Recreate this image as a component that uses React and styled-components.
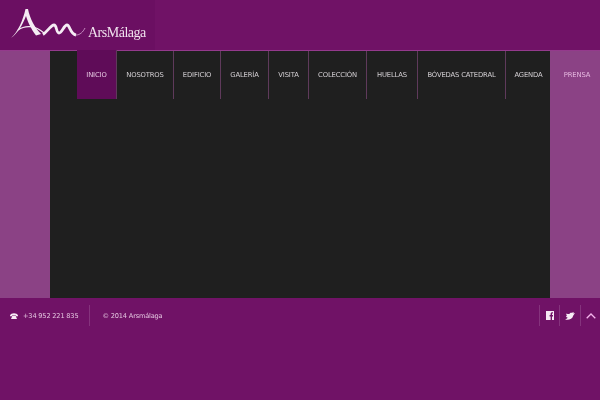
import React from 'react';
import styled, { createGlobalStyle } from 'styled-components';

const GlobalStyle = createGlobalStyle`
  html, body {
    margin: 0;
    padding: 0;
    background: #701266;
    font-family: "DejaVu Sans", Verdana, sans-serif;
  }
`;

const Page = styled.div`
  width: 600px;
  height: 400px;
  overflow: hidden;
  display: flex;
  flex-direction: column;
  background: #701266;
`;

const Header = styled.header`
  height: 50px;
  flex: none;
  display: flex;
  border-bottom: 1px solid #943a8c;
`;

const LogoBox = styled.div`
  width: 155px;
  height: 50px;
  background: #6b0f62;
  display: flex;
  align-items: flex-start;
  padding: 8px 0 0 10px;
  box-sizing: border-box;
  will-change: transform;
`;

const LogoName = styled.span`
  font-family: "Liberation Serif", serif;
  font-size: 14px;
  line-height: 16px;
  letter-spacing: -0.5px;
  color: #f0e2ee;
  margin: 17px 0 0 2px;
`;

const Main = styled.div`
  height: 247px;
  flex: none;
  display: flex;
`;

const Side = styled.div`
  width: 50px;
  flex: none;
  background: #8b4285;
`;

const Center = styled.main`
  position: relative;
  z-index: 1;
  width: 500px;
  flex: none;
  background: #1f1f1f;
  padding-left: 27px;
  box-sizing: border-box;
`;

const Nav = styled.nav`
  display: flex;
  height: 48px;
  width: 523px;
  will-change: transform;
`;

const NavItem = styled.a`
  width: ${(props) => props.$w}px;
  flex: none;
  box-sizing: border-box;
  display: flex;
  align-items: center;
  justify-content: center;
  font-size: 6.8px;
  letter-spacing: -0.14px;
  white-space: nowrap;
  color: ${(props) => (props.$active ? '#e3c4df' : props.$last ? '#e6b8e0' : '#d4d0d4')};
  background: ${(props) => (props.$active ? '#5f0c58' : 'transparent')};
  border-right: ${(props) => (props.$noLine ? 'none' : '1px solid #5f3a5b')};
  margin-top: ${(props) => (props.$active ? '-1px' : '0')};
`;

const Footer = styled.footer`
  flex: 1;
  display: flex;
  justify-content: space-between;
  align-items: flex-start;
  padding-top: 7px;
`;

const FooterLeft = styled.div`
  display: flex;
  align-items: center;
  height: 21px;
  padding-left: 10px;
  font-size: 6.6px;
  letter-spacing: -0.17px;
  color: #e3c4df;
  will-change: transform;
`;

const Phone = styled.span`
  display: flex;
  align-items: center;
  gap: 5px;
  padding-right: 11px;
  height: 21px;
  border-right: 1px solid #85337d;
  margin-right: 12px;
`;

const Social = styled.div`
  display: flex;
  height: 21px;
`;

const SocialBtn = styled.span`
  width: ${(props) => props.$w}px;
  height: 21px;
  box-sizing: border-box;
  display: flex;
  align-items: center;
  justify-content: center;
  border-left: 1px solid #85337d;
`;

const logoMark = (
  <svg width="76" height="32" viewBox="0 0 76 32" style={{ flex: 'none' }}>
    <path d="M1 30C8 24 13 12 15.500 1L18 1C20 11 25 20 31 26L26 27.500C21 21 17.500 13 16 8C13 16 8 25 1 30Z" fill="#f5ecf4" />
    <path d="M8 22C15 17 25 17 34 25" stroke="#f5ecf4" strokeWidth="1.300" fill="none" />
    <path d="M33 26.500C37 24 41 17 44 17C47 17 46 25 49 25C52 25 54 17 57 17C60 17 60 26 66 27" stroke="#f5ecf4" strokeWidth="2.800" fill="none" />
    <path d="M66 27C70 27 73 24 75 20" stroke="#d9a8d4" strokeWidth="0.8" fill="none" />
  </svg>
);

const navItems = [
  ['INICIO', 40],
  ['NOSOTROS', 57],
  ['EDIFICIO', 47],
  ['GALERÍA', 48],
  ['VISITA', 40],
  ['COLECCIÓN', 58],
  ['HUELLAS', 51],
  ['BÓVEDAS CATEDRAL', 88],
  ['AGENDA', 45],
  ['PRENSA', 52],
];

const App = () => {
  return (
    <Page>
      <GlobalStyle />
      <Header>
        <LogoBox>
          {logoMark}
          <LogoName>ArsMálaga</LogoName>
        </LogoBox>
      </Header>
      <Main>
        <Side />
        <Center>
          <Nav>
            {navItems.map(([label, w], i) => (
              <NavItem
                key={label}
                $w={w}
                $active={i === 0}
                $last={i === navItems.length - 1}
                $noLine={i >= navItems.length - 2}
              >
                {label}
              </NavItem>
            ))}
          </Nav>
        </Center>
        <Side />
      </Main>
      <Footer>
        <FooterLeft>
          <Phone>
            <svg width="8" height="6" viewBox="0 0 8 6">
              <path d="M0 2.500C1 -0.500 7 -0.500 8 2.500L8 3.200L5.800 3.200L5.800 2L2.200 2L2.200 3.200L0 3.200ZM2.500 2.500L5.500 2.500L7 6L1 6Z" fill="#f7ecf5" />
            </svg>
            <span>+34 952 221 835</span>
          </Phone>
          <span>© 2014 Arsmálaga</span>
        </FooterLeft>
        <Social>
          <SocialBtn $w={20}>
            <svg width="8" height="9" viewBox="0 0 8 9">
              <path d="M0 0H8V9H6V5.500H7V4H6V3C6 2.500 6.300 2.300 7 2.300V1.200C5.500 1 4.600 1.700 4.600 3V4H3.600V5.500H4.600V9H0Z" fill="#f5e8f3" />
            </svg>
          </SocialBtn>
          <SocialBtn $w={21}>
            <svg width="10" height="8" viewBox="0 0 10 8">
              <path d="M0 7.500C3 8.500 7.500 7.500 8.300 3.500L10 1L8.300 1.500L8.800 0L7 0.800C5.800 0.300 4.500 1 4.500 2C3.500 2.200 2.500 2 1.500 1.500C1 2.500 1.500 3.500 2 4L1 4C1.300 5 2 5.500 2.800 5.800C2 6.700 1.200 7.200 0 7.500Z" fill="#f7ecf5" />
            </svg>
          </SocialBtn>
          <SocialBtn $w={20}>
            <svg width="10" height="6" viewBox="0 0 10 6">
              <path d="M0.700 5.300L5 1L9.300 5.300" stroke="#f4b4ec" strokeWidth="1.300" fill="none" />
            </svg>
          </SocialBtn>
        </Social>
      </Footer>
    </Page>
  );
};

export default App;
